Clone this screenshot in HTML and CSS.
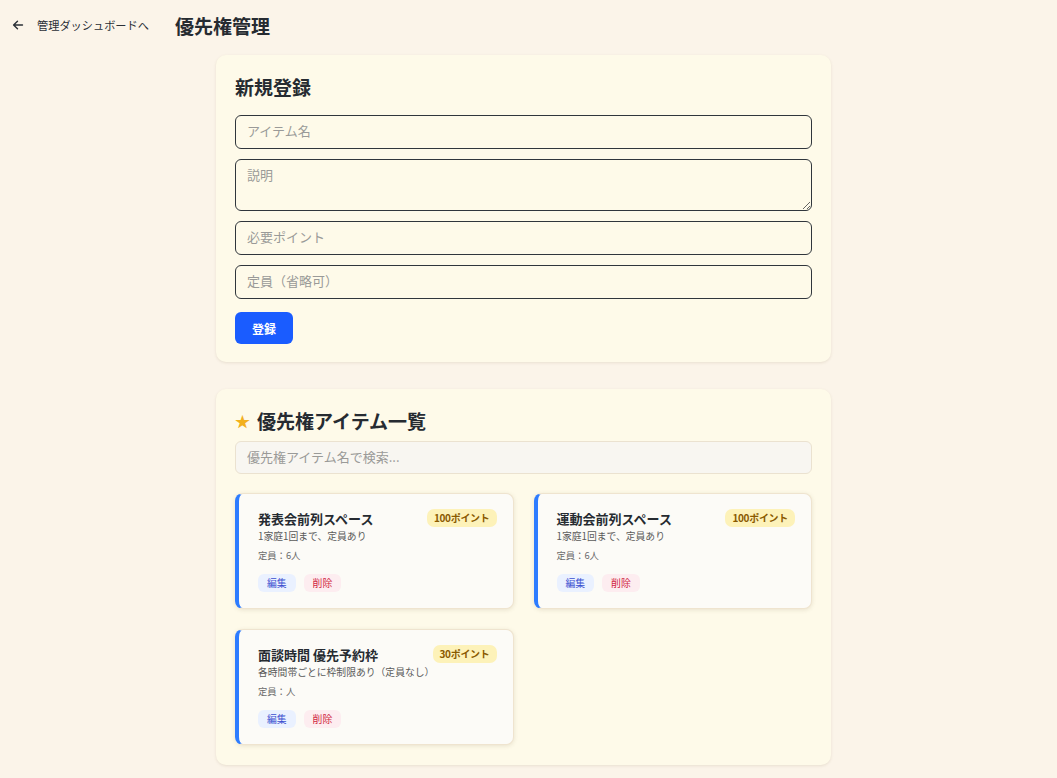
FILE: index.html
```html
<!DOCTYPE html>
<html lang="ja">
<head>
<meta charset="utf-8">
<title>優先権管理</title>
<link rel="stylesheet" href="styles.css">
</head>
<body>
<header class="topbar">
  <a class="back" href="#">
    <svg class="back-icon" width="12" height="12" viewBox="0 0 12 12" fill="none" stroke="#2a2f36" stroke-width="1.4" stroke-linecap="round" stroke-linejoin="round"><path d="M10.5 6H1.8M5.5 2.2L1.6 6l3.9 3.8"/></svg>
    <span>管理ダッシュボードへ</span>
  </a>
  <h1 class="page-title">優先権管理</h1>
</header>
<main class="main">
  <section class="card">
    <h2 class="card-title">新規登録</h2>
    <form class="form">
      <input class="field" type="text" placeholder="アイテム名">
      <textarea class="field area" placeholder="説明"></textarea>
      <input class="field" type="text" placeholder="必要ポイント">
      <input class="field" type="text" placeholder="定員（省略可）">
      <div><button class="submit" type="button">登録</button></div>
    </form>
  </section>
  <section class="card card-list">
    <h2 class="card-title list-title"><span class="star">★</span>優先権アイテム一覧</h2>
    <input class="search" type="text" placeholder="優先権アイテム名で検索...">
    <div class="grid">
      <div class="item">
        <div class="item-head"><span class="item-name">発表会前列スペース</span><span class="badge">100ポイント</span></div>
        <p class="desc">1家庭1回まで、定員あり</p>
        <p class="cap">定員：6人</p>
        <div class="actions"><button class="edit">編集</button><button class="del">削除</button></div>
      </div>
      <div class="item">
        <div class="item-head"><span class="item-name">運動会前列スペース</span><span class="badge">100ポイント</span></div>
        <p class="desc">1家庭1回まで、定員あり</p>
        <p class="cap">定員：6人</p>
        <div class="actions"><button class="edit">編集</button><button class="del">削除</button></div>
      </div>
      <div class="item">
        <div class="item-head"><span class="item-name">面談時間 優先予約枠</span><span class="badge">30ポイント</span></div>
        <p class="desc">各時間帯ごとに枠制限あり（定員なし）</p>
        <p class="cap">定員：人</p>
        <div class="actions"><button class="edit">編集</button><button class="del">削除</button></div>
      </div>
    </div>
  </section>
</main>
</body>
</html>
```

FILE: styles.css
```css
* { box-sizing: border-box; }
html, body { margin: 0; }
body {
  background: #fbf4e9;
  font-family: "Noto Sans CJK JP", "Noto Sans", sans-serif;
  color: #2a2f36;
  padding-right: 10px;
}
.topbar {
  display: flex;
  align-items: center;
  height: 55px;
  padding: 0 0 5px 12px;
}
.back {
  display: flex;
  align-items: center;
  gap: 13px;
  text-decoration: none;
  color: #2a2f36;
  font-size: 11.2px;
  margin-right: 26px;
}
.back-icon { display: block; }
.page-title {
  margin: 0;
  font-size: 19px;
  font-weight: 700;
  color: #262b31;
}
.main {
  width: 615px;
  margin: 0 auto 30px;
  display: flex;
  flex-direction: column;
  gap: 27px;
}
.card {
  background: #fefae9;
  border-radius: 10px;
  padding: 19px 19px 18px;
  box-shadow: 0 1px 3px rgba(120, 100, 60, 0.14);
}
.card-list { padding-bottom: 20px; }
.card-title {
  margin: 0 0 15px;
  font-size: 19px;
  line-height: 26px;
  font-weight: 700;
  color: #262b31;
}
.form { display: flex; flex-direction: column; gap: 10px; }
.field {
  display: block;
  width: 100%;
  height: 34px;
  border: 1px solid #30363c;
  border-radius: 6px;
  background: transparent;
  padding: 0 11px 3px;
  font-family: inherit;
  font-size: 13px;
  color: #2a2f36;
}
.field::placeholder { color: #9a9a98; }
.area { height: 52px; padding-top: 5px; resize: vertical; }
.form > div { margin-top: 3px; }
.submit {
  height: 32px;
  width: 58px;
  border: none;
  border-radius: 6px;
  background: #1a5cff;
  color: #fff;
  font-family: inherit;
  font-size: 12px;
  font-weight: 700;
}
.list-title {
  display: flex;
  align-items: center;
  gap: 7px;
  line-height: 24px;
  margin-top: 1px;
  margin-bottom: 8px;
}
.star { color: #f2b01e; font-size: 15px; }
.search {
  display: block;
  width: 100%;
  height: 33px;
  border: 1px solid #ebe2d0;
  border-radius: 6px;
  background: #f8f6f1;
  padding: 0 11px 2px;
  font-family: inherit;
  font-size: 13px;
}
.search::placeholder { color: #9a9a98; }
.grid {
  margin-top: 19px;
  display: grid;
  grid-template-columns: 1fr 1fr;
  gap: 20px;
}
.item {
  background: #fcfbf7;
  border: 1px solid #efe4cf;
  border-left: 4px solid #2d7cff;
  border-radius: 8px;
  padding: 14px 16px 16px 19px;
  height: 116px;
  box-shadow: 0 1px 4px rgba(120, 100, 60, 0.16);
}
.item-head {
  display: flex;
  justify-content: space-between;
  align-items: center;
  height: 20px;
}
.item-name { font-size: 13px; font-weight: 700; color: #262b31; }
.badge {
  background: #fdf2b9;
  color: #8a5a00;
  font-size: 10px;
  font-weight: 700;
  border-radius: 7px;
  padding: 0 7px;
  line-height: 18px;
  letter-spacing: -0.3px;
}
.desc { margin: 1px 0 0; font-size: 9.8px; line-height: 15px; color: #5a5a5a; }
.cap { margin: 4px 0 0; font-size: 9.3px; line-height: 15px; color: #6a6a6a; }
.actions { display: flex; gap: 8px; margin-top: 11px; }
.actions button {
  border: none;
  height: 18px;
  padding: 0 9px;
  border-radius: 6px;
  font-family: inherit;
  font-size: 9.8px;
}
.edit { background: #eaf1ff; color: #3a4fd0; }
.del { background: #fdedf0; color: #d0243e; }
```
